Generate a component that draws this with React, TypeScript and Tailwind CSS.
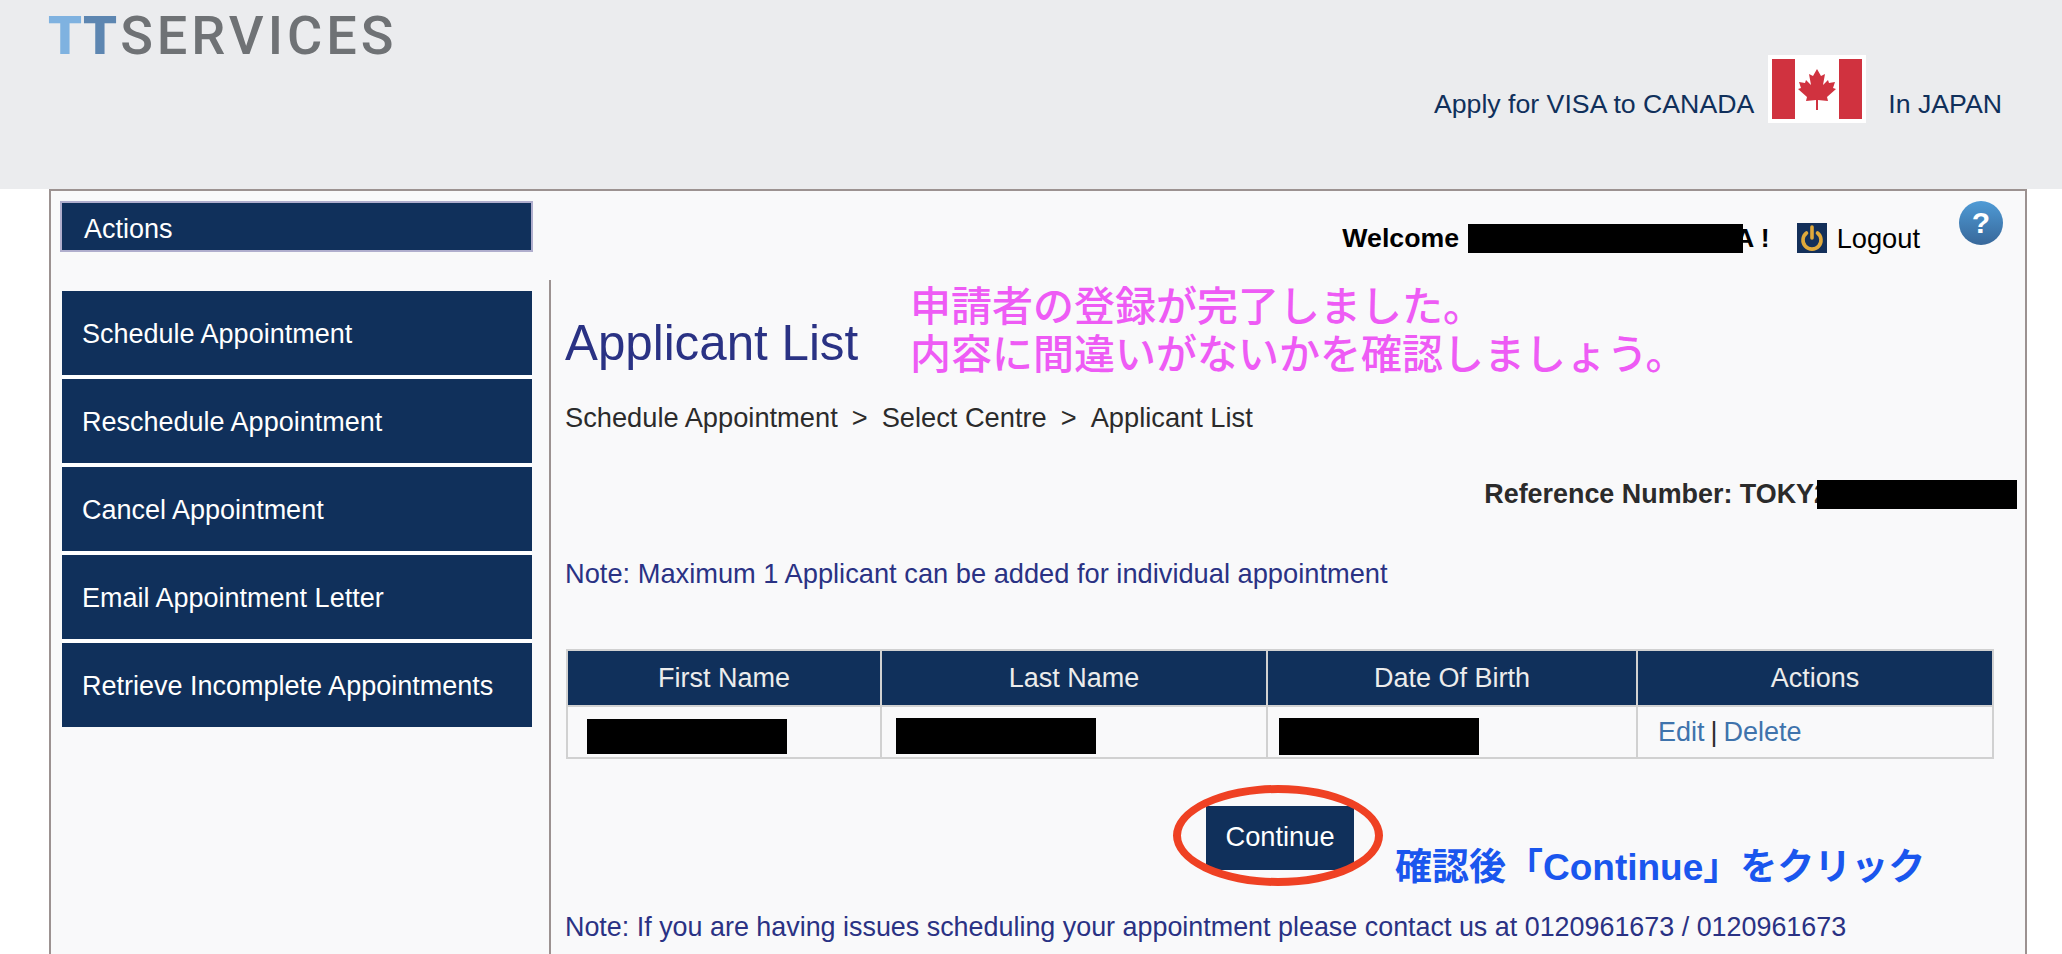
import { Fragment } from "react";

const menuItems = [
  "Schedule Appointment",
  "Reschedule Appointment",
  "Cancel Appointment",
  "Email Appointment Letter",
  "Retrieve Incomplete Appointments",
];

const columns = [
  { label: "First Name", width: "w-[314px]" },
  { label: "Last Name", width: "w-[386px]" },
  { label: "Date Of Birth", width: "w-[370px]" },
  { label: "Actions", width: "w-[356px]" },
];

function Redacted({ className }: { className: string }) {
  return <span className={`inline-block shrink-0 bg-black align-middle ${className}`} />;
}

function CanadaFlag() {
  return (
    <span className="ml-[14px] mr-[13px] block h-[68px] w-[98px] bg-white p-[4px]">
      <svg viewBox="0 0 90 60" className="h-full w-full" aria-label="Canada">
        <rect width="90" height="60" fill="#ffffff" />
        <rect width="23" height="60" fill="#d0323f" />
        <rect x="67" width="23" height="60" fill="#d0323f" />
        <path
          fill="#d0323f"
          d="M45 10l-4 7-4-2 2 11-5-5-1 3-6-1 2 6-3 1 9 8-1 4 10-1v10h2V41l10 1-1-4 9-8-3-1 2-6-6 1-1-3-5 5 2-11-4 2z"
        />
      </svg>
    </span>
  );
}

function PowerIcon() {
  return (
    <svg viewBox="0 0 30 30" className="h-[30px] w-[30px] shrink-0">
      <rect width="30" height="30" fill="#14305a" />
      <path d="M9.5 10a9 9 0 1 0 11 0" fill="none" stroke="#e0a93b" strokeWidth="3.6" strokeLinecap="round" />
      <path d="M15 4v11" stroke="#e0a93b" strokeWidth="3.6" strokeLinecap="round" />
    </svg>
  );
}

export default function App() {
  return (
    <div className="h-[954px] overflow-hidden bg-white font-['Liberation_Sans','Noto_Sans_CJK_JP',sans-serif] text-[27.25px] leading-[32px]">
      {/* Header */}
      <header className="flex h-[189px] justify-between bg-[#ebecee] pl-[48px] pr-[60px]">
        <div className="flex h-[72px] items-center font-['Roboto',sans-serif] text-[54px] leading-none">
          <span className="font-black tracking-[1px] text-[#7fb2e0]">T</span>
          <span className="font-black tracking-[3px] text-[#5d86b1]">T</span>
          <span className="font-medium tracking-[4px] text-[#6f7275]">SERVICES</span>
        </div>
        <div className="flex h-[123px] items-end text-[26.7px] text-[#10305b]">
          <span className="mb-[3px]">Apply for VISA to CANADA</span>
          <CanadaFlag />
          <span className="mb-[3px] ml-[9px]">In JAPAN</span>
        </div>
      </header>

      {/* Main panel */}
      <div className="ml-[49px] h-[765px] w-[1978px] border-2 border-b-0 border-[#9c9291] bg-[#f9f9fa]">
        <div className="flex h-[89px] justify-between pl-[9px] pr-[22px] pt-[10px]">
          <div className="flex h-[51px] w-[473px] items-center border-2 border-[#b0aecd] bg-[#10305b] pl-[22px] pt-[5px] text-[27px] text-white">
            Actions
          </div>
          <div className="flex h-[60px] items-start text-black">
            <div className="mt-[21px] mr-[27px] flex items-center whitespace-nowrap text-[26.7px] font-bold">
              <span>Welcome</span>
              <Redacted className="relative z-10 ml-[9px] h-[29px] w-[275px]" />
              <span className="-ml-[8px]">A !</span>
            </div>
            <div className="mt-[20px] flex items-center">
              <PowerIcon />
              <span className="ml-[10px] mt-[2px]">Logout</span>
            </div>
            <span className="ml-[39px] flex h-[44px] w-[44px] items-center justify-center rounded-full bg-gradient-to-b from-[#4f9bd6] to-[#38689a] text-[30px] font-bold text-white">
              ?
            </span>
          </div>
        </div>

        <div className="flex">
          <nav className="w-[498px] pl-[11px] pt-[11px]">
            <ul className="flex w-[470px] flex-col gap-[4px] bg-white text-[27px]">
              {menuItems.map((item) => (
                <li key={item} className="flex h-[84px] items-center bg-[#10305b] pl-[20px] pt-[2px] text-white">
                  {item}
                </li>
              ))}
            </ul>
          </nav>

          <main className="relative h-[700px] flex-1 border-l-2 border-[#9c9291] pl-[14px]">
            <h1 className="mt-[35px] text-[49.3px] leading-[56px] text-[#2a3284]">Applicant List</h1>

            {/* Annotation */}
            <div className="absolute left-[359px] top-[3px] text-[41px] font-medium leading-[48px] text-[#ee5bf5]">
              <p>申請者の登録が完了しました。</p>
              <p>内容に間違いがないかを確認しましょう。</p>
            </div>

            <p className="mt-[31px] text-[#2b2b2b]">
              {["Schedule Appointment", "Select Centre", "Applicant List"].map((crumb, i) => (
                <Fragment key={crumb}>
                  {i > 0 && <span className="mx-[14px]">&gt;</span>}
                  {crumb}
                </Fragment>
              ))}
            </p>

            <p className="mt-[44px] flex items-center justify-end pr-[8px] text-[26.9px] font-bold text-[#2b2b2b]">
              Reference Number: TOKY2
              <Redacted className="-ml-[12px] h-[29px] w-[200px]" />
            </p>

            <p className="mt-[48px] text-[#2a3284]">Note: Maximum 1 Applicant can be added for individual appointment</p>

            <table className="ml-[1px] mt-[59px] w-[1426px] table-fixed border-collapse text-[27px]">
              <thead>
                <tr className="h-[56px] bg-[#10305b] text-[#ececec]">
                  {columns.map((col) => (
                    <th key={col.label} className={`${col.width} border-2 border-[#d1d1d1] font-normal`}>
                      {col.label}
                    </th>
                  ))}
                </tr>
              </thead>
              <tbody>
                <tr className="h-[52px] text-[#2b2b2b]">
                  <td className="border-2 border-[#d1d1d1] pl-[19px] pt-[8px]">
                    <Redacted className="h-[35px] w-[200px]" />
                  </td>
                  <td className="border-2 border-[#d1d1d1] pl-[14px] pt-[8px]">
                    <Redacted className="h-[36px] w-[200px]" />
                  </td>
                  <td className="border-2 border-[#d1d1d1] pl-[11px] pt-[8px]">
                    <Redacted className="h-[37px] w-[200px]" />
                  </td>
                  <td className="border-2 border-[#d1d1d1] pl-[20px]">
                    <a className="text-[#3f73ac]">Edit</a>
                    <span className="mx-[6px]">|</span>
                    <a className="text-[#3f73ac]">Delete</a>
                  </td>
                </tr>
              </tbody>
            </table>

            <div className="relative ml-[641px] mt-[47px] h-[64px] w-[148px]">
              <button className="h-full w-full bg-[#10305b] pb-[3px] text-white">Continue</button>
              <div className="absolute -left-[33px] -top-[21px] h-[101px] w-[210px] rounded-[50%] border-[8px] border-[#ef4123]" />
              <span className="absolute left-[189px] top-[38px] whitespace-nowrap text-[37px] font-bold leading-[48px] text-[#1a56ee]">
                確認後「Continue」をクリック
              </span>
            </div>

            <p className="mt-[41px] text-[26.9px] text-[#2a3284]">
              Note: If you are having issues scheduling your appointment please contact us at 0120961673 / 0120961673
            </p>
          </main>
        </div>
      </div>
    </div>
  );
}
